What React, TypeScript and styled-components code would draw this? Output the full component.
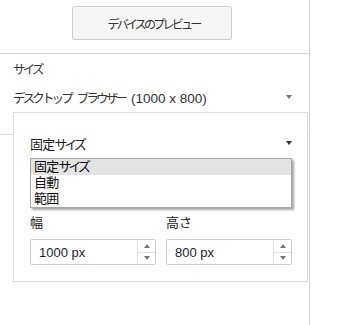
import React from "react";
import styled, { createGlobalStyle } from "styled-components";

const GlobalStyle = createGlobalStyle`
  html, body {
    margin: 0;
    padding: 0;
    background: #fff;
  }
  body {
    font-family: "Liberation Sans", "Noto Sans CJK JP", sans-serif;
    color: #333;
  }
`;

const Page = styled.div`
  display: flex;
  height: 325px;
`;

const Sidebar = styled.aside`
  position: relative;
  width: 310px;
  box-sizing: border-box;
  border-right: 1px solid #d4d4d4;
  display: flex;
  flex-direction: column;
`;

// katakana in the original UI font are much narrower than Noto's
const Kana = styled.span`
  letter-spacing: -0.23em;
`;

const Kanji = styled.span`
  letter-spacing: -0.06em;
`;

const ButtonBar = styled.div`
  height: 54px;
  box-sizing: border-box;
  border-bottom: 1px solid #d4d4d4;
  padding: 6px 5px 0 0;
  display: flex;
  justify-content: center;
  align-items: flex-start;
`;

const PreviewButton = styled.button`
  width: 160px;
  height: 34px;
  padding: 0 0 0 3px;
  border: 1px solid #cfcfcf;
  border-radius: 2px;
  background: #f6f6f6;
  color: #333;
  font-family: inherit;
  font-size: 12px;
  cursor: pointer;
`;

const Section = styled.div`
  padding: 6px 13px 0;
  height: 80px;
  box-sizing: border-box;
`;

const SectionLabel = styled.div`
  font-size: 12.5px;
  line-height: 20px;
  color: #333;
`;

const SelectRow = styled.div<{ $dark?: boolean }>`
  position: relative;
  display: flex;
  align-items: center;
  justify-content: space-between;
  height: ${({ $dark }) => ($dark ? "28px" : "34px")};
  font-size: ${({ $dark }) => ($dark ? "13px" : "12.5px")};
  color: ${({ $dark }) => ($dark ? "#222" : "#333")};
`;

const Latin = styled.span`
  font-size: 13.5px;
`;

const Gap = styled.span`
  display: inline-block;
  width: 6px;
`;

const Caret = styled.span<{ $dark?: boolean }>`
  width: 0;
  height: 0;
  margin-right: ${({ $dark }) => ($dark ? "0" : "4px")};
  border-left: 3.5px solid transparent;
  border-right: 3.5px solid transparent;
  border-top: 4px solid ${({ $dark }) => ($dark ? "#333" : "#777")};
`;

const LowerSection = styled.div`
  border-top: 1px solid #dcdcdc;
  flex: 1;
`;

const Popover = styled.div`
  position: absolute;
  top: 112px;
  left: 13px;
  width: 295px;
  box-sizing: border-box;
  background: #fff;
  border: 1px solid #dedede;
  padding: 16px 15px 16px 16px;
`;

const ListBox = styled.ul`
  position: absolute;
  top: calc(100% + 1px);
  left: 0;
  right: 0;
  margin: 0;
  padding: 0;
  list-style: none;
  background: #fff;
  border: 1px solid #a6a6a6;
  box-shadow: 2px 2px 2px rgba(0, 0, 0, 0.35);
  z-index: 2;
`;

const ListItem = styled.li<{ $active?: boolean }>`
  height: 16px;
  line-height: 16px;
  padding-left: 3px;
  font-size: 13px;
  color: #111;
  background: ${({ $active }) => ($active ? "#e3e3e3" : "transparent")};
`;

const FieldGrid = styled.div`
  margin-top: 58px;
  display: grid;
  grid-template-columns: 1fr 1fr;
  column-gap: 10px;
`;

const Field = styled.div`
  display: flex;
  flex-direction: column;
  gap: 8px;
`;

const FieldLabel = styled.label`
  font-size: 13px;
  line-height: 16px;
  color: #222;
`;

const NumberBox = styled.div`
  display: flex;
  height: 26px;
  box-sizing: border-box;
  border: 1px solid #cdcdcd;
  border-radius: 2px;
`;

const NumberValue = styled.div`
  flex: 1;
  padding-left: 8px;
  display: flex;
  align-items: center;
  font-size: 13px;
  color: #1c1c30;
`;

const Spinner = styled.div`
  width: 17px;
  border-left: 1px solid #e0e0e0;
  display: flex;
  flex-direction: column;
`;

const SpinHalf = styled.div<{ $down?: boolean }>`
  flex: 1;
  display: flex;
  align-items: center;
  justify-content: center;
  border-top: ${({ $down }) => ($down ? "1px solid #e0e0e0" : "none")};

  &::after {
    content: "";
    width: 0;
    height: 0;
    border-left: 3.5px solid transparent;
    border-right: 3.5px solid transparent;
    ${({ $down }) =>
      $down ? "border-top: 4px solid #777;" : "border-bottom: 4px solid #777;"}
  }
`;

const NumberField = ({ label, value }: { label: string; value: string }) => (
  <Field>
    <FieldLabel>{label}</FieldLabel>
    <NumberBox>
      <NumberValue>{value}</NumberValue>
      <Spinner>
        <SpinHalf />
        <SpinHalf $down />
      </Spinner>
    </NumberBox>
  </Field>
);

const FixedSize = () => (
  <span>
    <Kanji>固定</Kanji>
    <Kana>サイズ</Kana>
  </span>
);

export default function App() {
  return (
    <>
      <GlobalStyle />
      <Page>
        <Sidebar>
          <ButtonBar>
            <PreviewButton>
              <Kana>デバイスのプレビュー</Kana>
            </PreviewButton>
          </ButtonBar>
          <Section>
            <SectionLabel>
              <Kana>サイズ</Kana>
            </SectionLabel>
            <SelectRow>
              <span>
                <Kana>デスクトップ</Kana>
                <Gap />
                <Kana>ブラウザー</Kana>
                <Gap />
                <Latin>(1000 x 800)</Latin>
              </span>
              <Caret />
            </SelectRow>
          </Section>
          <LowerSection />
          <Popover>
            <SelectRow $dark>
              <FixedSize />
              <Caret $dark />
              <ListBox>
                <ListItem $active>
                  <FixedSize />
                </ListItem>
                <ListItem>
                  <Kanji>自動</Kanji>
                </ListItem>
                <ListItem>
                  <Kanji>範囲</Kanji>
                </ListItem>
              </ListBox>
            </SelectRow>
            <FieldGrid>
              <NumberField label="幅" value="1000 px" />
              <NumberField label="高さ" value="800 px" />
            </FieldGrid>
          </Popover>
        </Sidebar>
      </Page>
    </>
  );
}
